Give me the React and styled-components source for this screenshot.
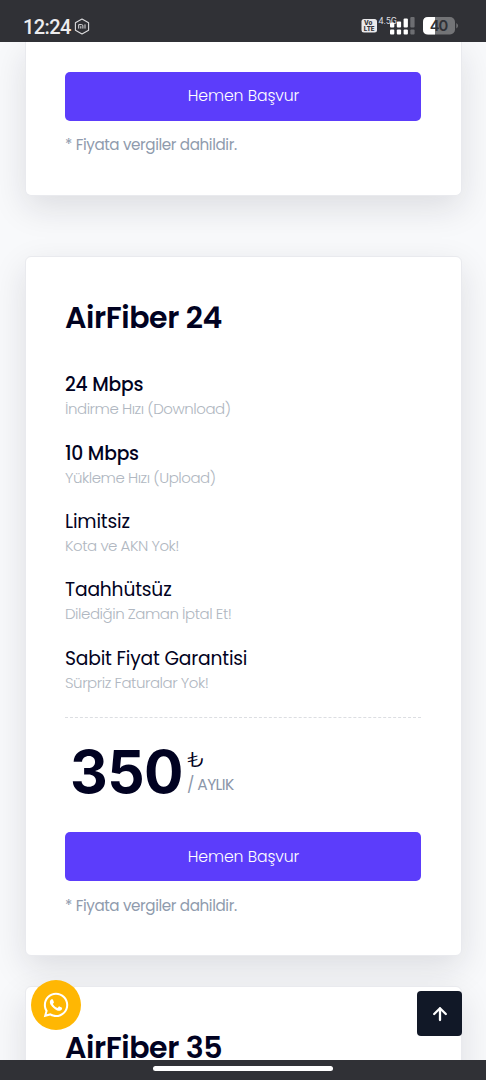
import styled, {createGlobalStyle} from "styled-components";
import {FaWhatsapp} from "react-icons/fa";

const GlobalStyle = createGlobalStyle`
  * {
    box-sizing: border-box;
  }
  body {
    margin: 0;
    background-color: #f8f9fb;
    font-family: Poppins, Inter, "Open Sans", sans-serif;
    color: #010221;
  }
  h2, p {
    margin: 0;
  }
`;
const Screen = styled.div`
  position: relative;
  display: flex;
  flex-direction: column;
  width: 486px;
  height: 1080px;
  overflow: hidden;
`;
const StatusBar = styled.header`
  display: flex;
  align-items: center;
  justify-content: space-between;
  flex: none;
  height: 42px;
  padding: 10px 28px 0 23px;
  background-color: #303136;
  color: #ececee;
  z-index: 2;
`;
const Clock = styled.div`
  display: flex;
  align-items: center;
  gap: 3px;
  padding-top: 1px;
  font: 500 20px/24px Roboto, sans-serif;
  letter-spacing: -0.6px;
`;
const Signals = styled.div`
  display: flex;
  align-items: center;
`;
const Content = styled.main`
  flex: 1;
  min-height: 0;
  padding: 0 24.5px 0 25px;
  overflow: hidden;
`;
const Card = styled.section`
  height: ${({$height}) => $height}px;
  margin-bottom: ${({$gap}) => $gap || 0}px;
  padding: ${({$top}) => $top}px 39.5px 0 39px;
  border: 1px solid #e9eaee;
  border-radius: ${({$cut}) => $cut ? "0 0 6px 6px" : "6px"};
  border-top-width: ${({$cut}) => $cut ? 0 : 1}px;
  background-color: #fff;
  box-shadow: 0 12px 34px rgba(22, 22, 45, 0.12);
`;
const Title = styled.h2`
  font-size: 30px;
  font-weight: 600;
  line-height: 36px;
  letter-spacing: -0.4px;
  white-space: nowrap;
`;
const Features = styled.div`
  display: grid;
  gap: 16.4px;
  margin-top: 35.3px;
  padding-bottom: 20.1px;
  border-bottom: 1px dashed #dcdee2;
`;
const Name = styled.p`
  font-size: 18.7px;
  font-weight: ${({$weight}) => $weight};
  line-height: 28px;
  letter-spacing: -0.18px;
  white-space: nowrap;
`;
const Detail = styled.p`
  height: 24px;
  font-size: 15px;
  font-weight: 300;
  line-height: 19px;
  color: #b0b7c1;
  letter-spacing: -0.47px;
  white-space: nowrap;
`;
const Price = styled.div`
  display: flex;
  gap: 6px;
  height: 62px;
  margin: 24px 0 27.9px 5px;
`;
const Amount = styled.span`
  width: 111px;
  font-family: Inter, sans-serif;
  font-size: 58.5px;
  font-weight: 650;
  line-height: 59px;
  letter-spacing: -0.6px;
`;
const Period = styled.div`
  display: flex;
  flex-direction: column;
  padding-top: 5px;
  font-size: 15.5px;
  line-height: 24px;
  color: #8b96a9;
  letter-spacing: -0.6px;
`;
const Lira = styled.span`
  font-size: 22px;
  font-weight: 300;
  line-height: 26px;
  color: #010221;
`;
const Apply = styled.button`
  display: block;
  width: 100%;
  height: 49.5px;
  padding: 0 0 1px 1px;
  border: 0;
  border-radius: 5px;
  background-color: #5c3dfb;
  color: #fff;
  font-family: inherit;
  font-size: 15.7px;
  font-weight: 300;
  letter-spacing: -0.1px;
`;
const Note = styled.p`
  margin-top: 12.4px;
  font-size: 15.2px;
  line-height: 24px;
  color: #8f9bad;
  letter-spacing: -0.4px;
`;
const WhatsApp = styled.button`
  position: absolute;
  left: 31px;
  top: 980px;
  display: grid;
  place-items: center;
  width: 50px;
  height: 50px;
  padding: 0;
  border: 0;
  border-radius: 50%;
  background-color: #ffb703;
  color: #fff;
`;
const ToTop = styled.button`
  position: absolute;
  left: 417px;
  top: 991px;
  display: grid;
  place-items: center;
  width: 45px;
  height: 45px;
  padding: 0;
  border: 0;
  border-radius: 4px;
  background-color: #111827;
`;
const NavBar = styled.footer`
  display: flex;
  justify-content: center;
  flex: none;
  height: 20px;
  padding-top: 6px;
  background-color: #303136;
  z-index: 2;
`;
const Pill = styled.div`
  width: 180px;
  height: 5px;
  border-radius: 3px;
  background-color: #fff;
`;

const features = [
  {name: "24 Mbps", detail: "İndirme Hızı (Download)", weight: 500},
  {name: "10 Mbps", detail: "Yükleme Hızı (Upload)", weight: 500},
  {name: "Limitsiz", detail: "Kota ve AKN Yok!", weight: 400},
  {name: "Taahhütsüz", detail: "Dilediğin Zaman İptal Et!", weight: 400},
  {name: "Sabit Fiyat Garantisi", detail: "Sürpriz Faturalar Yok!", weight: 400},
];

function MiIcon() {
  return (
    <svg width="16" height="17" viewBox="0 0 16 17" fill="none" stroke="#dcdcde">
      <path d="M8 1L14.6 4.7V12.3L8 16L1.4 12.3V4.7Z" strokeWidth="1.1" strokeLinejoin="round"/>
      <path d="M4.7 10.6V6.6H7.6Q8.9 6.6 8.9 7.9V10.6M6.8 8.2V10.6M11 6.4V10.6" strokeWidth="1"/>
    </svg>
  );
}

function StatusIcons() {
  return (
    <svg width="98" height="22" viewBox="0 0 98 22" fontFamily="Inter, sans-serif">
      <rect x="1.5" y="4" width="15.5" height="13.5" rx="2.5" fill="#e9e9eb"/>
      <text x="8.2" y="10.2" fontSize="6.2" fontWeight="800" textAnchor="middle" fill="#303136">Vo</text>
      <text x="9.2" y="16" fontSize="6.2" fontWeight="800" textAnchor="middle" fill="#303136">LTE</text>
      <text x="18.5" y="9" fontSize="9" fill="#dedee0" textLength="18.5" fontFamily="Roboto, sans-serif">4.5G</text>
      <g fill="#fff">
        <rect x="30" y="7.5" width="4.3" height="5" rx="1"/>
        <rect x="36.8" y="6.5" width="4.3" height="6" rx="1"/>
        <rect x="43.6" y="3.5" width="4.3" height="9" rx="1"/>
        <rect x="30" y="14.5" width="4.3" height="5" rx="1"/>
        <rect x="36.8" y="14.5" width="4.3" height="5" rx="1"/>
        <rect x="43.6" y="14.5" width="4.3" height="5" rx="1"/>
      </g>
      <rect x="50.3" y="2" width="4.3" height="10.5" rx="1" fill="#6d6e72"/>
      <rect x="50.3" y="14.5" width="4.3" height="5" rx="1" fill="#6d6e72"/>
      <rect x="63" y="2" width="32" height="17.5" rx="5" fill="#737477"/>
      <path d="M75 2H68Q63 2 63 7V14.5Q63 19.5 68 19.5H75Z" fill="#fff"/>
      <path d="M96.3 8Q98 9 98 10.7Q98 12.5 96.3 13.5Z" fill="#737477"/>
      <text x="79" y="16" fontSize="14.8" fontWeight="600" textAnchor="middle" textLength="18.5" fill="#303136">40</text>
    </svg>
  );
}

export default function App() {
  return (
    <Screen>
      <GlobalStyle/>
      <StatusBar>
        <Clock>12:24<MiIcon/></Clock>
        <Signals><StatusIcons/></Signals>
      </StatusBar>
      <Content>
        <Card $cut $height={153.5} $gap={60.5} $top={29.5}>
          <Apply>Hemen Başvur</Apply>
          <Note>* Fiyata vergiler dahildir.</Note>
        </Card>
        <Card $height={699.5} $gap={30.5} $top={43}>
          <Title>AirFiber 24</Title>
          <Features>
            {features.map((item) => (
              <div key={item.name}>
                <Name $weight={item.weight}>{item.name}</Name>
                <Detail>{item.detail}</Detail>
              </div>
            ))}
          </Features>
          <Price>
            <Amount>350</Amount>
            <Period>
              <Lira>₺</Lira>
              <span>/ AYLIK</span>
            </Period>
          </Price>
          <Apply>Hemen Başvur</Apply>
          <Note>* Fiyata vergiler dahildir.</Note>
        </Card>
        <Card $height={700} $top={43}>
          <Title>AirFiber 35</Title>
        </Card>
      </Content>
      <WhatsApp aria-label="WhatsApp"><FaWhatsapp size={28}/></WhatsApp>
      <ToTop aria-label="Yukarı çık">
        <svg width="16" height="16" viewBox="0 0 16 16" fill="none" stroke="#fff" strokeWidth="2.3" strokeLinecap="round" strokeLinejoin="round">
          <path d="M8 14V2.2M2.2 8L8 2.2L13.8 8"/>
        </svg>
      </ToTop>
      <NavBar><Pill/></NavBar>
    </Screen>
  );
}
